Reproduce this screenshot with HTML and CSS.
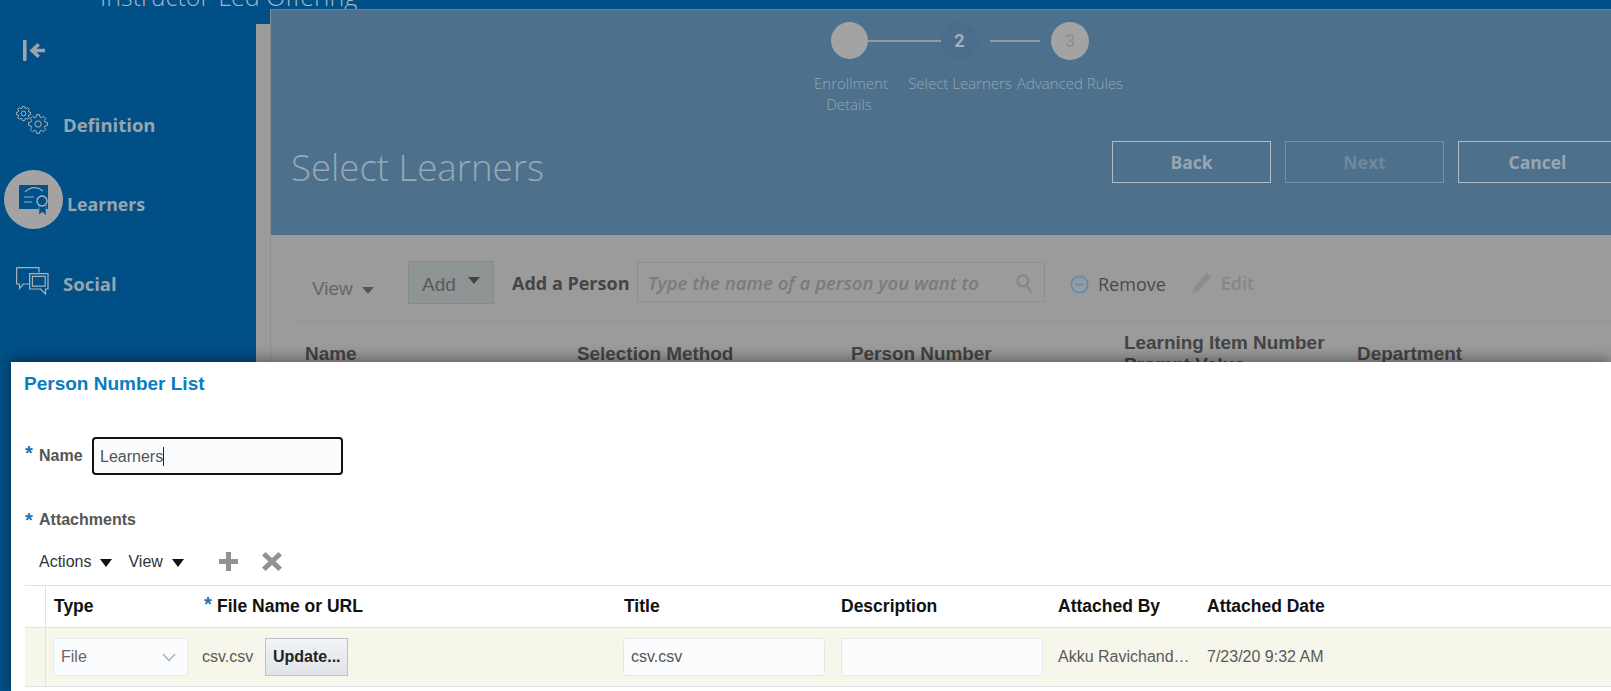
FILE: index.html
```html
<!DOCTYPE html>
<html lang="en">
<head>
<meta charset="utf-8">
<title>Select Learners</title>
<link rel="stylesheet" href="styles.css">
</head>
<body>
<div class="page">
  <header class="topbar"><span class="topbar-title">Instructor-Led Offering</span></header>
  <div class="workspace">
    <nav class="sidebar">
      <svg class="collapse" width="22" height="22" viewBox="0 0 22 22"><rect x="0" y="0" width="3.6" height="21" rx="1"/><path d="M22 8.8H13.6L17 5.4 14.6 3 6.5 10.5 14.6 18 17 15.6 13.6 12.2H22Z"/></svg>
      <div class="nav-item nav-definition">
        <svg class="nav-icon" width="32" height="28" viewBox="0 0 32 28">
          <defs>
            <g id="gear">
              <polygon vector-effect="non-scaling-stroke" points="7.31,-2.09 9.88,-1.56 9.88,1.56 7.31,2.09 6.65,3.68 8.09,5.88 5.88,8.09 3.68,6.65 2.09,7.31 1.56,9.88 -1.56,9.88 -2.09,7.31 -3.68,6.65 -5.88,8.09 -8.09,5.88 -6.65,3.68 -7.31,2.09 -9.88,1.56 -9.88,-1.56 -7.31,-2.09 -6.65,-3.68 -8.09,-5.88 -5.88,-8.09 -3.68,-6.65 -2.09,-7.31 -1.56,-9.88 1.56,-9.88 2.09,-7.31 3.68,-6.65 5.88,-8.09 8.09,-5.88 6.65,-3.68"/>
              <circle vector-effect="non-scaling-stroke" r="3.3"/>
            </g>
          </defs>
          <use href="#gear" transform="translate(7.5 7.5) scale(.72)"/>
          <use href="#gear" transform="translate(22 18) scale(.95)"/>
        </svg>
        <span class="nav-label">Definition</span>
      </div>
      <div class="nav-item nav-learners">
        <span class="nav-badge">
          <svg width="30" height="31" viewBox="0 0 30 31">
            <rect class="cert-body" x="0" y="0" width="29" height="24"/>
            <path class="cert-line" d="M6 7Q15 -1 24 6M5 12H15M5 17H13"/>
            <path class="cert-ribbon" d="M20 20V30L23.5 27 27 30.5V20Z"/>
            <circle class="cert-seal" cx="23" cy="16" r="5"/>
          </svg>
        </span>
        <span class="nav-label">Learners</span>
      </div>
      <div class="nav-item nav-social">
        <svg class="nav-icon" width="33" height="28" viewBox="0 0 33 28">
          <path class="talk" d="M.6.6H23V5.500M13 17H7.500L3.500 21.500V17H.6V.6"/>
          <path class="talk" d="M13.600 6.600H32V22H29.500V27L24.500 22H13.600Z"/>
          <path class="talk" d="M16.400 9.400H29.200V19.200H16.400Z"/>
        </svg>
        <span class="nav-label">Social</span>
      </div>
    </nav>
    <div class="gutter"></div>
    <main class="main">
      <section class="banner">
        <div class="track">
          <span class="step-dot"></span>
          <span class="step-line step-line-long"></span>
          <span class="step-dot step-current">2</span>
          <span class="step-line step-line-short"></span>
          <span class="step-dot step-next">3</span>
        </div>
        <div class="step-labels">
          <span class="step-label">Enrollment Details</span>
          <span class="step-label">Select Learners</span>
          <span class="step-label step-label-wide">Advanced Rules</span>
        </div>
        <div class="title-row">
          <h1 class="page-title">Select Learners</h1>
          <div class="actions">
            <button class="action">Back</button>
            <button class="action action-disabled">Next</button>
            <button class="action">Cancel</button>
          </div>
        </div>
      </section>
      <section class="panel">
        <div class="toolbar">
          <span class="view-menu">View<i class="caret caret-grey"></i></span>
          <span class="add-menu">Add<i class="caret caret-up"></i></span>
          <span class="person-label">Add a Person</span>
          <div class="person-search">
            <span class="person-hint">Type the name of a person you want to</span>
            <svg width="20" height="23" viewBox="0 0 18 22"><circle cx="7" cy="7.500" r="5.200"/><path d="M10.500 12L15.500 19"/></svg>
          </div>
          <span class="remove"><svg width="19" height="19" viewBox="0 0 19 19"><circle cx="9.500" cy="9.500" r="8.200"/><path d="M5.500 9.500H13.500"/></svg>Remove</span>
          <span class="edit"><svg width="22" height="24" viewBox="0 0 22 24"><path d="M15.500 2L20 6 7 20 1 23 3 16.500Z"/></svg>Edit</span>
        </div>
        <div class="columns">
          <span>Name</span>
          <span>Selection Method</span>
          <span>Person Number</span>
          <span>Learning Item Number<br>Prompt Value</span>
          <span>Department</span>
        </div>
      </section>
    </main>
  </div>

  <section class="dialog">
    <h2 class="dialog-title">Person Number List</h2>
    <div class="field">
      <span class="req">*</span><label class="field-label">Name</label>
      <div class="name-input"><span>Learners</span><i class="text-caret"></i></div>
    </div>
    <div class="attach-head"><span class="req">*</span><span class="field-label">Attachments</span></div>
    <div class="attach-tools">
      <span class="tool">Actions<i class="caret caret-black"></i></span>
      <span class="tool">View<i class="caret caret-black"></i></span>
      <svg class="tool-plus" width="19" height="19" viewBox="0 0 19 19"><path d="M7 0H12V7H19V12H12V19H7V12H0V7H7Z"/></svg>
      <svg class="tool-x" width="20" height="19" viewBox="0 0 20 19"><path d="M3.500 0L10 6 16.500 0 20 3.500 13.500 9.500 20 15.500 16.500 19 10 13 3.500 19 0 15.500 6.500 9.500 0 3.500Z"/></svg>
    </div>
    <div class="grid grid-head">
      <span class="gutter-cell"></span>
      <span class="cell">Type</span>
      <span class="cell"><span class="req req-th">*</span>File Name or URL</span>
      <span class="cell cell-title">Title</span>
      <span class="cell">Description</span>
      <span class="cell">Attached By</span>
      <span class="cell">Attached Date</span>
    </div>
    <div class="grid grid-row">
      <span class="gutter-cell"></span>
      <div class="cell cell-type"><div class="box box-select"><span>File</span><svg width="14" height="9" viewBox="0 0 14 9"><path d="M1 1L7 7.500 13 1"/></svg></div></div>
      <div class="cell file-cell"><span>csv.csv</span><button class="update">Update...</button></div>
      <div class="cell"><div class="box box-text">csv.csv</div></div>
      <div class="cell"><div class="box box-text"></div></div>
      <div class="cell">Akku Ravichand…</div>
      <div class="cell">7/23/20 9:32 AM</div>
    </div>
  </section>
</div>
</body>
</html>
```
FILE: styles.css
```css
* { box-sizing: border-box; }
html, body { margin: 0; height: 100%; overflow: hidden; }
body { font-family: "Liberation Sans", Arial, sans-serif; background: #005087; }

.page { position: relative; width: 1611px; height: 691px; overflow: hidden; display: flex; flex-direction: column; background: #005087; }

.topbar { height: 9px; flex: none; display: flex; align-items: flex-end; overflow: hidden; padding-left: 100px; }
.topbar-title { font: 300 25px/1 "Open Sans", sans-serif; color: #a5b6c4; white-space: nowrap; }

.workspace { flex: 1; display: flex; min-height: 0; }

.sidebar { width: 256px; flex: none; padding: 31px 0 0 16px; display: flex; flex-direction: column; }
.collapse { margin-left: 7px; fill: #9aa5ad; flex: none; }
.nav-item { display: flex; align-items: flex-start; flex: none; }
.nav-label { font: 700 18.5px/28px "Open Sans", sans-serif; color: #98a5af; }
.nav-definition { margin-top: 44px; }
.nav-definition .nav-label { margin: 5px 0 0 15px; }
.nav-learners { margin: 31px 0 0 -12px; }
.nav-learners .nav-label { margin: 20px 0 0 4px; font-size: 17.7px; }
.nav-social { margin-top: 38px; }
.nav-social .nav-label { margin: 3px 0 0 14px; }
.nav-icon { flex: none; fill: none; stroke: #a9b1b6; stroke-width: 1; }
.nav-badge { width: 59px; height: 59px; border-radius: 50%; background: #a3a3a3; display: flex; padding: 15px 0 0 15px; flex: none; }
.cert-body { fill: #00508a; }
.cert-line { fill: none; stroke: #a3a9ad; stroke-width: 1.2; }
.cert-ribbon { fill: #00508a; stroke: #a3a3a3; stroke-width: .6; }
.cert-seal { fill: #00508a; stroke: #b4b8ba; stroke-width: 1.3; }
.talk { fill: none; stroke: #aab1b6; stroke-width: 1.2; }

.gutter { width: 14px; flex: none; margin-top: 15px; background: #9b9b9b; }

.main { flex: 1; min-width: 0; display: flex; flex-direction: column; border-left: 1px solid #8a8f92; background: #9b9b9b; }

.banner { height: 226px; flex: none; padding: 12px 0 0 20px; background: #4d718d; border-top: 1px solid #5d7f98; }
.track { display: flex; align-items: center; height: 37px; margin-left: 540px; }
.step-dot { width: 37px; height: 37px; flex: none; border-radius: 50%; background: #a3a3a3; display: flex; align-items: center; justify-content: center; font: 700 18px "Roboto", sans-serif; color: #8d8f90; }
.step-current { background: #4b6c8b; color: #a2afbb; }
.step-next { width: 38px; height: 38px; font-weight: 400; }
.step-line { height: 2px; flex: none; background: #8d9ba6; }
.step-line-long { width: 73px; }
.step-line-short { width: 50px; margin: 0 11px 0 12px; }
.step-labels { display: flex; margin: 14px 0 0 503px; }
.step-label { width: 110px; text-align: center; font: 300 15px/21px "Open Sans", sans-serif; color: #94a6b4; padding: 0 20px; }
.step-labels .step-label:nth-child(2) { padding: 0 0 0 2px; white-space: nowrap; }
.step-label-wide { width: 112px; padding: 0; white-space: nowrap; }

.title-row { display: flex; align-items: flex-start; margin-top: 26px; margin-right: -6px; }
.page-title { flex: 1; margin: 0; font: 300 36.6px/52px "Open Sans", sans-serif; color: #98a8b4; }
.actions { display: flex; gap: 14px; }
.action { width: 159px; height: 42px; background: transparent; border: 1px solid #aebdc9; font: 700 17.5px "Open Sans", sans-serif; color: #99a6b1; padding: 0; }
.action-disabled { border-color: #7390a6; color: #6f889c; }

.panel { flex: 1; padding: 26px 0 0 27px; }
.toolbar { height: 61px; display: flex; align-items: flex-start; border-bottom: 1px solid #929292; padding-left: 14px; }
.view-menu { font: 19px/24px "Liberation Sans", sans-serif; color: #666; margin: 16px 35px 0 0; display: flex; align-items: center; width: 61px; flex: none; }
.caret { display: inline-block; width: 0; height: 0; border-style: solid; border-color: transparent; flex: none; }
.caret-grey { border-width: 7px 6px 0; border-top-color: #555; margin: 3px 0 0 9px; }
.add-menu { width: 86px; height: 43px; background: #8f9495; border: 1px solid #868a8b; display: flex; align-items: center; padding: 4px 0 0 13px; font: 19px "Liberation Sans", sans-serif; color: #5a5a5a; flex: none; }
.caret-up { border-width: 7px 6.5px 0; border-top-color: #444; margin: -8px 0 0 12px; }
.person-label { width: 125px; flex: none; font: 700 18px/24px "Open Sans", sans-serif; color: #454545; margin: 10px 0 0 18px; white-space: nowrap; }
.person-search { width: 408px; height: 40px; flex: none; margin-top: 1px; border: 1px solid #8b8f90; display: flex; align-items: center; justify-content: space-between; padding: 0 9px 0 10px; }
.person-hint { font: italic 600 18.6px "Open Sans", sans-serif; color: #797b7c; white-space: nowrap; }
.person-search svg { fill: none; stroke: #7f8a90; stroke-width: 2.2; flex: none; margin-top: 4px; }
.remove { display: flex; align-items: center; gap: 9px; margin: 11px 0 0 25px; font: 18px/24px "Open Sans", sans-serif; color: #4a4a4a; }
.remove svg { fill: none; stroke: #5f8cb0; stroke-width: 1.8; }
.edit { display: flex; align-items: center; gap: 8px; margin: 10px 0 0 25px; font: 600 18px/24px "Open Sans", sans-serif; color: #858787; }
.edit svg { fill: #8b8d8d; }

.columns { display: grid; grid-template-columns: 272px 274px 273px 233px auto; align-items: center; margin-top: 10px; padding-left: 7px; font: 700 18.9px/22px "Liberation Sans", sans-serif; color: #444; }

.dialog { position: absolute; left: 11px; top: 362px; right: 0; bottom: 0; background: #fff; padding-left: 14px; overflow: hidden; box-shadow: 0 -2px 14px rgba(0, 0, 0, .45); }
.dialog-title { margin: 0 0 0 -1px; padding: 11px 0 0 0; height: 42px; font: 700 19px/22px "Liberation Sans", sans-serif; color: #0a7cc0; }
.req { color: #1a73b4; font: 700 20px/20px "Liberation Sans", sans-serif; width: 14px; flex: none; }
.field-label { font: 700 16px/20px "Liberation Sans", sans-serif; color: #555; }
.field { display: flex; align-items: flex-start; margin-top: 33px; height: 38px; }
.field .req { margin-top: 6px; }
.field .field-label { width: 53px; flex: none; margin-top: 9px; }
.name-input { width: 251px; height: 38px; border: 2px solid #111; border-radius: 4px; background: #fbfcfe; display: flex; align-items: center; padding: 1px 0 0 6px; font-size: 16px; color: #555; }
.text-caret { width: 1px; height: 19px; background: #222; }
.attach-head { display: flex; align-items: flex-start; margin-top: 35px; height: 20px; }
.attach-tools { display: flex; align-items: center; height: 21px; margin: 21px 0 0 14px; }
.tool { display: flex; align-items: center; font-size: 16px; color: #333; margin-right: 16px; }
.caret-black { border-width: 8px 6px 0; border-top-color: #111; margin: 2px 0 0 9px; }
.tool-plus { fill: #8f9396; margin-left: 19px; }
.tool-x { fill: #8f9396; margin-left: 24px; }

.grid { display: grid; grid-template-columns: 21px 150px 419px 218px 217px 149px 1fr; }
.grid-head { margin-top: 13px; height: 43px; border-top: 1px solid #dfe3e6; border-bottom: 1px solid #dfe3e6; font: 700 17.5px/41px "Liberation Sans", sans-serif; color: #111; }
.grid-row { height: 59px; background: #f6f6ea; border-bottom: 1px solid #dfe3e6; font-size: 16px; color: #5a5a5a; align-items: center; }
.gutter-cell { align-self: stretch; border-right: 1px solid #dfe3e6; }
.cell { padding-left: 8px; white-space: nowrap; display: flex; align-items: center; }
.cell-title { padding-left: 9px; }
.cell-type { padding-left: 7px; }
.req-th { width: 13px; margin-top: -6px; }
.box { height: 38px; background: #fbfcfe; border: 1px solid #e6e9ec; border-radius: 3px; display: flex; align-items: center; padding-left: 7px; color: #555; }
.box-select { width: 135px; justify-content: space-between; padding-right: 11px; color: #666; }
.box-select svg { fill: none; stroke: #b3b8bd; stroke-width: 1.8; }
.box-text { width: 202px; }
.file-cell { gap: 12px; padding-left: 6px; }
.update { width: 83px; height: 38px; padding: 0; background: linear-gradient(#f1f3f5, #e0e4e8); border: 1px solid #b8c4cc; font: 700 16px "Liberation Sans", sans-serif; color: #222; }
```
